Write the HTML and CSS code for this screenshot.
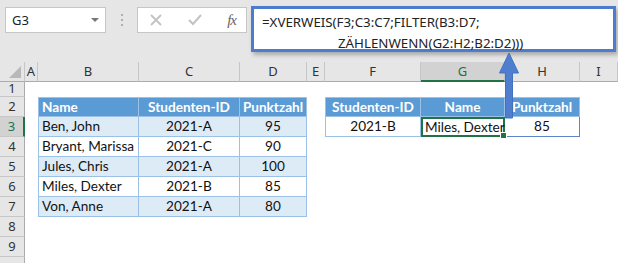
FILE: index.html
```html
<!DOCTYPE html>
<html lang="de">
<head>
  <meta charset="UTF-8" />
  <title>XVERWEIS mit FILTER</title>
  <link rel="stylesheet" href="styles.css">
</head>
<body>
  <div class="toolbar">
    <div class="name-box">
      <span>G3</span>
      <span class="caret"></span>
    </div>
    <div class="grip"><i></i><i></i><i></i></div>
    <div class="fx-buttons">
      <svg width="14" height="14" viewBox="0 0 14 14"><path d="M2 2 L12 12 M12 2 L2 12" stroke="#c2c2c2" stroke-width="1.8" fill="none"/></svg>
      <svg width="16" height="14" viewBox="0 0 16 14"><path d="M2 7 L6 11 L14 2" stroke="#c2c2c2" stroke-width="2" fill="none"/></svg>
      <span class="fx">fx</span>
    </div>
    <div class="formula">
      <div>=XVERWEIS(F3;C3:C7;FILTER(B3:D7;</div>
      <div class="indent">ZÄHLENWENN(G2:H2;B2:D2)))</div>
    </div>
  </div>

  <div class="sheet">
    <!-- column headers -->
    <div class="corner"><span class="tri"></span></div>
    <div class="ch">A</div><div class="ch">B</div><div class="ch">C</div><div class="ch">D</div>
    <div class="ch">E</div><div class="ch">F</div><div class="ch active">G</div><div class="ch">H</div><div class="ch">I</div>

    <!-- row 1 -->
    <div class="rh short">1</div>
    <div></div><div></div><div></div><div></div><div></div><div></div><div></div><div></div><div></div>

    <!-- row 2 -->
    <div class="rh">2</div>
    <div></div>
    <div class="t th left top">Name</div>
    <div class="t th top center">Studenten-ID</div>
    <div class="t th top center">Punktzahl</div>
    <div></div>
    <div class="t th left top center">Studenten-ID</div>
    <div class="t th top center">Name</div>
    <div class="t th top center">Punktzahl</div>
    <div></div>

    <!-- row 3 -->
    <div class="rh active">3</div>
    <div></div>
    <div class="t band left">Ben, John</div>
    <div class="t band center">2021-A</div>
    <div class="t band center">95</div>
    <div></div>
    <div class="t left center">2021-B</div>
    <div class="t selected">Miles, Dexter</div>
    <div class="t center dark">85</div>
    <div></div>

    <!-- row 4 -->
    <div class="rh">4</div>
    <div></div>
    <div class="t left">Bryant, Marissa</div>
    <div class="t center">2021-C</div>
    <div class="t center">90</div>
    <div></div><div></div><div></div><div></div><div></div>

    <!-- row 5 -->
    <div class="rh">5</div>
    <div></div>
    <div class="t band left">Jules, Chris</div>
    <div class="t band center">2021-A</div>
    <div class="t band center">100</div>
    <div></div><div></div><div></div><div></div><div></div>

    <!-- row 6 -->
    <div class="rh">6</div>
    <div></div>
    <div class="t left">Miles, Dexter</div>
    <div class="t center">2021-B</div>
    <div class="t center">85</div>
    <div></div><div></div><div></div><div></div><div></div>

    <!-- row 7 -->
    <div class="rh">7</div>
    <div></div>
    <div class="t band left">Von, Anne</div>
    <div class="t band center">2021-A</div>
    <div class="t band center">80</div>
    <div></div><div></div><div></div><div></div><div></div>

    <div class="rh">8</div>
    <div></div><div></div><div></div><div></div><div></div><div></div><div></div><div></div><div></div>
    <div class="rh">9</div>
    <div></div><div></div><div></div><div></div><div></div><div></div><div></div><div></div><div></div>
    <div class="rh"></div>
  </div>

  <svg class="arrow" width="22" height="68" viewBox="0 0 22 68">
    <path d="M11 1 L20.5 21 L14.5 21 L14.5 66 L7.5 66 L7.5 21 L1.5 21 Z" fill="#4e7ecd" stroke="#4271c0" stroke-width="1"/>
  </svg>
</body>
</html>
```

FILE: styles.css
```css
body {
  margin: 0;
  width: 618px;
  height: 263px;
  overflow: hidden;
  background: #fff;
  font-family: 'Noto Sans', Arial, sans-serif;
  position: relative;
}
.toolbar {
  height: 62px;
  background: #e6e6e6;
  display: flex;
  align-items: flex-start;
  padding: 7px 0 0 5px;
  box-sizing: border-box;
}
.name-box {
  width: 101px;
  height: 26px;
  box-sizing: border-box;
  background: #fff;
  border: 1px solid #c6c6c6;
  display: flex;
  align-items: center;
  justify-content: space-between;
  padding: 0 6px 0 6px;
  font-size: 13px;
  color: #222;
}
.caret {
  width: 0;
  height: 0;
  border-left: 4px solid transparent;
  border-right: 4px solid transparent;
  border-top: 4px solid #777;
}
.grip {
  width: 31px;
  height: 26px;
  display: flex;
  flex-direction: column;
  align-items: center;
  justify-content: center;
  gap: 3px;
}
.grip i {
  width: 2px;
  height: 2px;
  background: #b0b0b0;
}
.fx-buttons {
  width: 110px;
  height: 26px;
  box-sizing: border-box;
  background: #fff;
  border: 1px solid #c6c6c6;
  display: flex;
  align-items: center;
  justify-content: space-between;
  padding: 0 10px 0 11px;
}
.fx {
  font-family: 'Liberation Serif', serif;
  font-style: italic;
  font-size: 15px;
  color: #666;
  letter-spacing: -1px;
}
.formula {
  margin: -1px 0 0 4px;
  width: 365px;
  height: 46px;
  box-sizing: border-box;
  background: #fff;
  border: 3px solid #4d7ccc;
  box-shadow: 2px 3px 4px rgba(0, 0, 0, 0.25);
  padding: 3px 0 0 8px;
  font-size: 13.3px;
  line-height: 21px;
  color: #222;
}
.formula .indent { padding-left: 76px; }

.sheet {
  display: grid;
  grid-template-columns: 25px 13px 101px 101px 67px 18px 96px 84px 75px 38px;
  grid-template-rows: 20px 15px;
  grid-auto-rows: 20px;
  height: 201px;
  overflow: hidden;
  font-family: Lato, 'Liberation Sans', sans-serif;
  font-size: 13.6px;
}
.sheet > div {
  box-sizing: border-box;
  min-width: 0;
  white-space: nowrap;
  overflow: visible;
}
.corner {
  background: #e6e6e6;
  border-right: 1px solid #c6c6c6;
  border-bottom: 1px solid #ababab;
  position: relative;
}
.corner .tri {
  position: absolute;
  right: 3px;
  bottom: 3px;
  width: 0;
  height: 0;
  border-left: 12px solid transparent;
  border-bottom: 12px solid #b8b8b8;
}
.ch {
  background: #e6e6e6;
  border-right: 1px solid #c6c6c6;
  border-bottom: 1px solid #ababab;
  font-family: 'Noto Sans', Arial, sans-serif;
  font-size: 13px;
  color: #333;
  text-align: center;
  line-height: 19px;
}
.ch.active {
  background: #d2d2d2;
  color: #217346;
  border-bottom: 2px solid #217346;
}
.rh {
  background: #e6e6e6;
  border-right: 1px solid #ababab;
  border-bottom: 1px solid #c6c6c6;
  font-family: 'Noto Sans', Arial, sans-serif;
  font-size: 13px;
  color: #333;
  text-align: center;
  line-height: 19px;
}
.rh.short { line-height: 13px; }
.rh.active {
  background: #d2d2d2;
  color: #217346;
  border-right: 2px solid #217346;
}

.t {
  border-right: 1px solid #9bc2e6;
  border-bottom: 1px solid #9bc2e6;
  padding-left: 3px;
  line-height: 19px;
  color: #111;
}
.t.left { border-left: 1px solid #9bc2e6; }
.t.top { border-top: 1px solid #9bc2e6; line-height: 18px; }
.t.center { text-align: center; padding-left: 0; }
.t.th {
  background: #5b9bd5;
  color: #fff;
  font-weight: 700;
}
.t.band { background: #ddebf7; }
.t.dark { border-right-color: #5b86c9; border-bottom-color: #5b86c9; }
.t.selected {
  border: 2px solid #217346;
  line-height: 16px;
  padding-left: 2px;
  position: relative;
}
.t.selected::after {
  content: '';
  position: absolute;
  right: -4px;
  bottom: -4px;
  width: 5px;
  height: 5px;
  background: #217346;
  border: 1px solid #fff;
}
.arrow {
  position: absolute;
  left: 498px;
  top: 52px;
}
```
